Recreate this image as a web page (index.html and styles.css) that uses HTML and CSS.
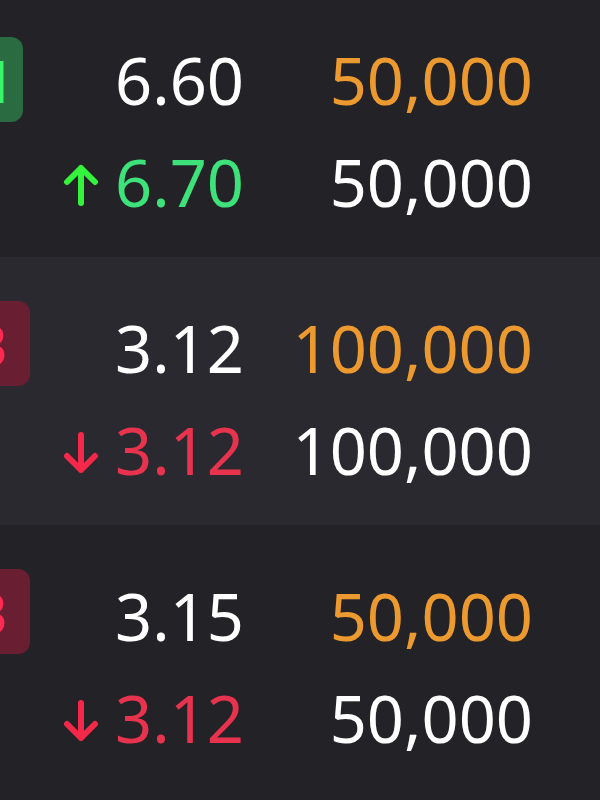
FILE: index.html
```html
<!DOCTYPE html>
<html>
<head>
<meta charset="utf-8">
<link rel="stylesheet" href="styles.css">
</head>
<body>
<div class="list">
  <section class="item">
    <div class="badge badge--buy"><span>M</span></div>
    <div class="lines">
      <div class="line">
        <span class="arrow"></span>
        <span class="price">6.60</span>
        <span class="qty qty--orange">50,000</span>
      </div>
      <div class="line">
        <span class="arrow arrow--up"><svg viewBox="0 0 36 42" width="36" height="42"><path d="M18 4V39M4 18L18 4L32 18" fill="none" stroke="#35f23c" stroke-width="6" stroke-linecap="round" stroke-linejoin="round"/></svg></span>
        <span class="price price--up">6.70</span>
        <span class="qty">50,000</span>
      </div>
    </div>
  </section>
  <section class="item item--alt">
    <div class="badge badge--sell"><span>B</span></div>
    <div class="lines">
      <div class="line">
        <span class="arrow"></span>
        <span class="price">3.12</span>
        <span class="qty qty--orange">100,000</span>
      </div>
      <div class="line">
        <span class="arrow arrow--down"><svg viewBox="0 0 36 42" width="36" height="42"><path d="M18 3V38M4 24L18 38L32 24" fill="none" stroke="#f5284a" stroke-width="6" stroke-linecap="round" stroke-linejoin="round"/></svg></span>
        <span class="price price--down">3.12</span>
        <span class="qty">100,000</span>
      </div>
    </div>
  </section>
  <section class="item">
    <div class="badge badge--sell"><span>B</span></div>
    <div class="lines">
      <div class="line">
        <span class="arrow"></span>
        <span class="price">3.15</span>
        <span class="qty qty--orange">50,000</span>
      </div>
      <div class="line">
        <span class="arrow arrow--down"><svg viewBox="0 0 36 42" width="36" height="42"><path d="M18 3V38M4 24L18 38L32 24" fill="none" stroke="#f5284a" stroke-width="6" stroke-linecap="round" stroke-linejoin="round"/></svg></span>
        <span class="price price--down">3.12</span>
        <span class="qty">50,000</span>
      </div>
    </div>
  </section>
</div>
</body>
</html>
```

FILE: styles.css
```css
html, body {
  margin: 0;
  padding: 0;
  background: #232327;
  overflow: hidden;
}
body {
  width: 600px;
  height: 800px;
  font-family: "Noto Sans", "Open Sans", sans-serif;
}
.list {
  margin-top: -11px;
  display: flex;
  flex-direction: column;
}
.item {
  height: 268px;
  box-sizing: border-box;
  padding-top: 40px;
  display: flex;
  align-items: flex-start;
  background: #232327;
}
.item--alt {
  background: #29292f;
}
.badge {
  flex: none;
  width: 85px;
  height: 85px;
  margin-left: -55px;
  margin-top: 4px;
  border-radius: 12px;
  display: flex;
  align-items: center;
  justify-content: center;
  font-weight: 700;
  font-size: 60px;
  line-height: 1;
}
.badge--buy {
  background: #2a6b42;
  color: #3af56a;
  margin-left: -62px;
  margin-right: 7px;
  margin-top: 8px;
}
.badge--sell {
  background: #6a1e31;
  color: #ff2a52;
}
.lines {
  display: flex;
  flex-direction: column;
}
.line {
  display: flex;
  align-items: center;
  height: 102px;
  font-size: 65px;
  line-height: 102px;
  color: #ffffff;
}
.arrow {
  width: 36px;
  height: 42px;
  margin-left: 33px;
  margin-top: 6px;
  display: flex;
  flex: none;
}
.price {
  width: 145px;
  text-align: right;
}
.price--up {
  color: #3ee27a;
}
.price--down {
  color: #e8334f;
}
.qty {
  width: 289px;
  text-align: right;
}
.qty--orange {
  color: #ec9a30;
}
```
